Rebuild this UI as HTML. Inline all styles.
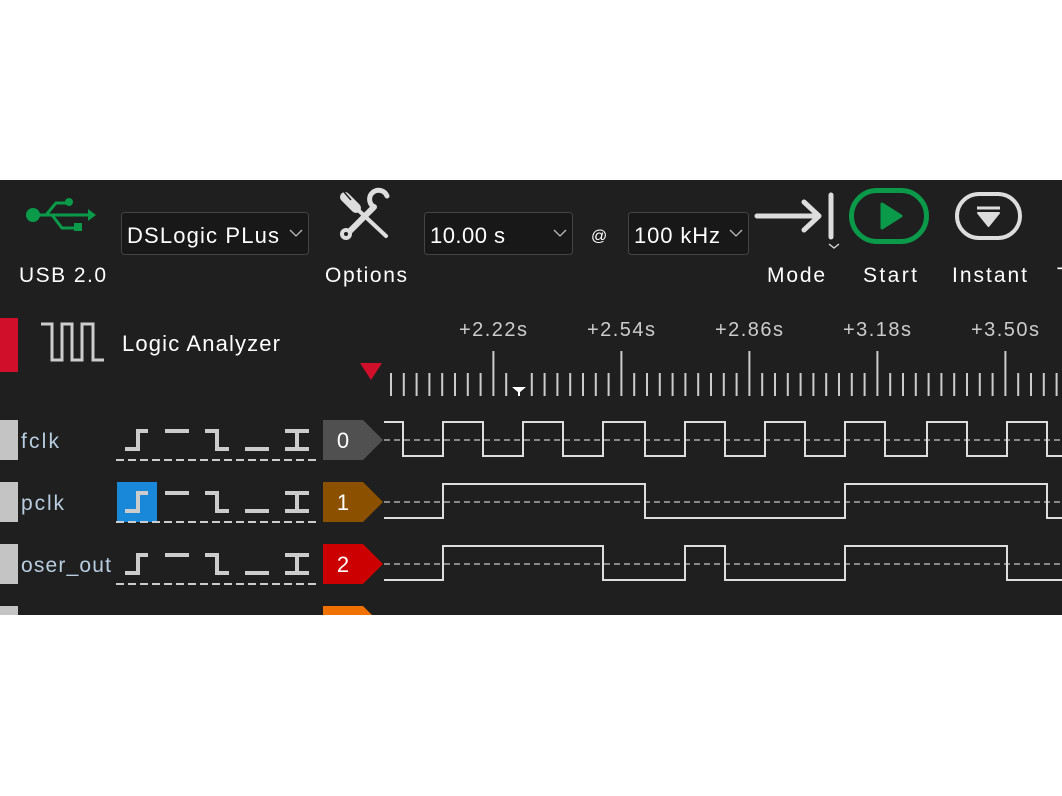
<!DOCTYPE html>
<html><head><meta charset="utf-8"><style>
html,body{margin:0;padding:0;background:#fff;width:1062px;height:796px;overflow:hidden}
#d{position:absolute;left:0;top:180px;width:1062px;height:435px;background:#1f1f1f;overflow:hidden}
svg{position:absolute;left:0;top:-180px}
text{font-family:"Liberation Sans",sans-serif}
</style></head><body>
<div id="d">
<svg width="1062" height="796" viewBox="0 0 1062 796">
<!-- USB icon -->
<g stroke="#0a9a4a" stroke-width="3" fill="none">
<path d="M34 215 H90"/><path d="M46 215 L56 203 H68"/><path d="M52 215 L62 228 H76"/>
</g>
<circle cx="33" cy="215" r="7" fill="#0a9a4a"/><circle cx="69" cy="202" r="4" fill="#0a9a4a"/>
<rect x="74" y="223" width="8" height="8" fill="#0a9a4a"/><path d="M88 209 L96 215 L88 221Z" fill="#0a9a4a"/>
<text x="19" y="282" font-size="21" fill="#fff" textLength="87">USB 2.0</text>
<!-- combo DSLogic -->
<rect x="121.5" y="212.5" width="187" height="42" rx="3" fill="#181818" stroke="#444"/>
<text x="127" y="243" font-size="22" fill="#fff" textLength="152">DSLogic PLus</text>
<path d="M290 230 l6 6 l6 -6" stroke="#bbb" fill="none" stroke-width="1.3"/>
<!-- options -->
<g fill="none" stroke="#ddd" stroke-linecap="round">
<path d="M345 197 L356 208" stroke-width="10"/>
<path d="M356 208 L386 236" stroke-width="4"/>
<path d="M346 235 L374 207" stroke-width="6"/>
<path d="M374 207 A9 9 0 1 1 387 196" stroke-width="5"/>
</g>
<path d="M344 192 L351 200 M348 189 L355 197" stroke="#1f1f1f" stroke-width="1.5"/>
<circle cx="346" cy="234" r="6" fill="#ddd"/><circle cx="346" cy="234" r="2" fill="#1f1f1f"/>
<text x="325" y="282" font-size="21" fill="#fff" textLength="82">Options</text>
<!-- combo time -->
<rect x="424.5" y="212.5" width="148" height="42" rx="3" fill="#181818" stroke="#444"/>
<text x="430" y="243" font-size="22" fill="#fff" textLength="75">10.00 s</text>
<path d="M554 230 l6 6 l6 -6" stroke="#bbb" fill="none" stroke-width="1.3"/>
<text x="591" y="241" font-size="16" fill="#fff">@</text>
<rect x="628.5" y="212.5" width="120" height="42" rx="3" fill="#181818" stroke="#444"/>
<text x="634" y="243" font-size="22" fill="#fff" textLength="86">100 kHz</text>
<path d="M730 230 l6 6 l6 -6" stroke="#bbb" fill="none" stroke-width="1.3"/>
<!-- mode -->
<g stroke="#ddd" stroke-width="5" fill="none" stroke-linecap="round" stroke-linejoin="round">
<path d="M757 216 H818"/><path d="M804 202 L819 216 L804 230"/><path d="M831 195 V237"/>
</g>
<path d="M829 244 l5 4 l5 -4" stroke="#ddd" fill="none" stroke-width="1.3"/>
<text x="767" y="282" font-size="21" fill="#fff" textLength="58">Mode</text>
<!-- start -->
<rect x="851.5" y="190.5" width="75" height="51" rx="25.5" fill="none" stroke="#0a9a4a" stroke-width="5"/>
<path d="M882 204 L901 216 L882 228Z" fill="#0a9a4a" stroke="#0a9a4a" stroke-width="3" stroke-linejoin="round"/>
<text x="863" y="282" font-size="21" fill="#fff" textLength="54">Start</text>
<!-- instant -->
<rect x="957" y="194" width="63" height="44" rx="22" fill="none" stroke="#ddd" stroke-width="4"/>
<path d="M977 208 H1000" stroke="#ddd" stroke-width="3"/>
<path d="M978 213 H999 L988.5 226Z" fill="#ddd" stroke="#ddd" stroke-width="2" stroke-linejoin="round"/>
<text x="952" y="282" font-size="21" fill="#fff" textLength="75">Instant</text>
<text x="1057" y="282" font-size="21" fill="#fff">T</text>
<!-- logic analyzer header -->
<rect x="0" y="318" width="18" height="54" fill="#d0102a"/>
<path d="M41 324 H52 V360 H62 V324 H72 V360 H82 V324 H93 V360 H104" stroke="#ccc" stroke-width="3" fill="none"/>
<text x="122" y="351" font-size="22" fill="#fff" textLength="158">Logic Analyzer</text>
<path d="M360 363 L382 363 L371 380Z" fill="#d0102a"/>
<!-- time labels -->
<g font-size="20" fill="#ccc">
<text x="459" y="336" textLength="68">+2.22s</text><text x="587" y="336" textLength="68">+2.54s</text><text x="715" y="336" textLength="68">+2.86s</text><text x="843" y="336" textLength="68">+3.18s</text><text x="971" y="336" textLength="68">+3.50s</text>
</g>
<path stroke="#ccc" stroke-width="2" d="M391 373V396M403.8 373V396M416.6 373V396M429.4 373V396M442.2 373V396M455 373V396M467.8 373V396M480.6 373V396M493.4 351V396M506.2 373V396M531.8 373V396M544.6 373V396M557.4 373V396M570.2 373V396M583 373V396M595.8 373V396M608.6 373V396M621.4 351V396M634.2 373V396M647 373V396M659.8 373V396M672.6 373V396M685.4 373V396M698.2 373V396M711 373V396M723.8 373V396M736.6 373V396M749.4 351V396M762.2 373V396M775 373V396M787.8 373V396M800.6 373V396M813.4 373V396M826.2 373V396M839 373V396M851.8 373V396M864.6 373V396M877.4 351V396M890.2 373V396M903 373V396M915.8 373V396M928.6 373V396M941.4 373V396M954.2 373V396M967 373V396M979.8 373V396M992.6 373V396M1005.4 351V396M1018.2 373V396M1031 373V396M1043.8 373V396M1056.6 373V396"/>
<path d="M512 387 H526 L519 393Z" fill="#fff"/><rect x="518" y="392" width="2" height="4" fill="#fff"/>
<!-- channel rows -->
<g fill="#c4c4c4"><rect x="0" y="420" width="18" height="40"/><rect x="0" y="482" width="18" height="40"/><rect x="0" y="544" width="18" height="40"/><rect x="0" y="606" width="18" height="40"/></g>
<g font-size="21" fill="#b8cde0">
<text x="21" y="448" textLength="38">fclk</text><text x="21" y="510" textLength="43">pclk</text><text x="21" y="572" textLength="90">oser_out</text>
</g>
<rect x="117" y="482" width="40" height="40" fill="#1a88d8"/>
<g id="trig" stroke="#ccc" stroke-width="4" fill="none">
<path d="M125 449 H138 V431 H148"/><path d="M165 431 H189"/><path d="M205 431 H217 V449 H229"/><path d="M245 449 H269"/><path d="M285 431 H309 M285 449 H309 M297 431 V449"/>
</g>
<use href="#trig" y="62"/><use href="#trig" y="124"/><use href="#trig" y="186"/>
<g stroke="#ccc" stroke-width="2" stroke-dasharray="8 4"><path d="M116 460 H318"/><path d="M116 522 H318"/><path d="M116 584 H318"/></g>
<path d="M323 420 H363 L383 440 L363 460 H323Z" fill="#505050"/>
<path d="M323 482 H363 L383 502 L363 522 H323Z" fill="#8b5000"/>
<path d="M323 544 H363 L383 564 L363 584 H323Z" fill="#cc0000"/>
<path d="M323 606 H363 L383 626 L363 646 H323Z" fill="#f07000"/>
<g font-size="22" fill="#fff" text-anchor="middle"><text x="343" y="448">0</text><text x="343" y="510">1</text><text x="343" y="572">2</text></g>
<g stroke="#888" stroke-width="2" stroke-dasharray="6 4"><path d="M384 440 H1062"/><path d="M384 502 H1062"/><path d="M384 564 H1062"/></g>
<g stroke="#ddd" stroke-width="2" fill="none">
<path d="M384 422 H403 V456 H443 V422 H483 V456 H523 V422 H563 V456 H603 V422 H645 V456 H685 V422 H725 V456 H765 V422 H805 V456 H845 V422 H885 V456 H927 V422 H967 V456 H1007 V422 H1047 V456 H1062"/>
<path d="M384 518 H443 V484 H645 V518 H845 V484 H1047 V518 H1062"/>
<path d="M384 580 H443 V546 H603 V580 H685 V546 H725 V580 H845 V546 H1007 V580 H1062"/>
</g>
</svg>
</div>
</body></html>
